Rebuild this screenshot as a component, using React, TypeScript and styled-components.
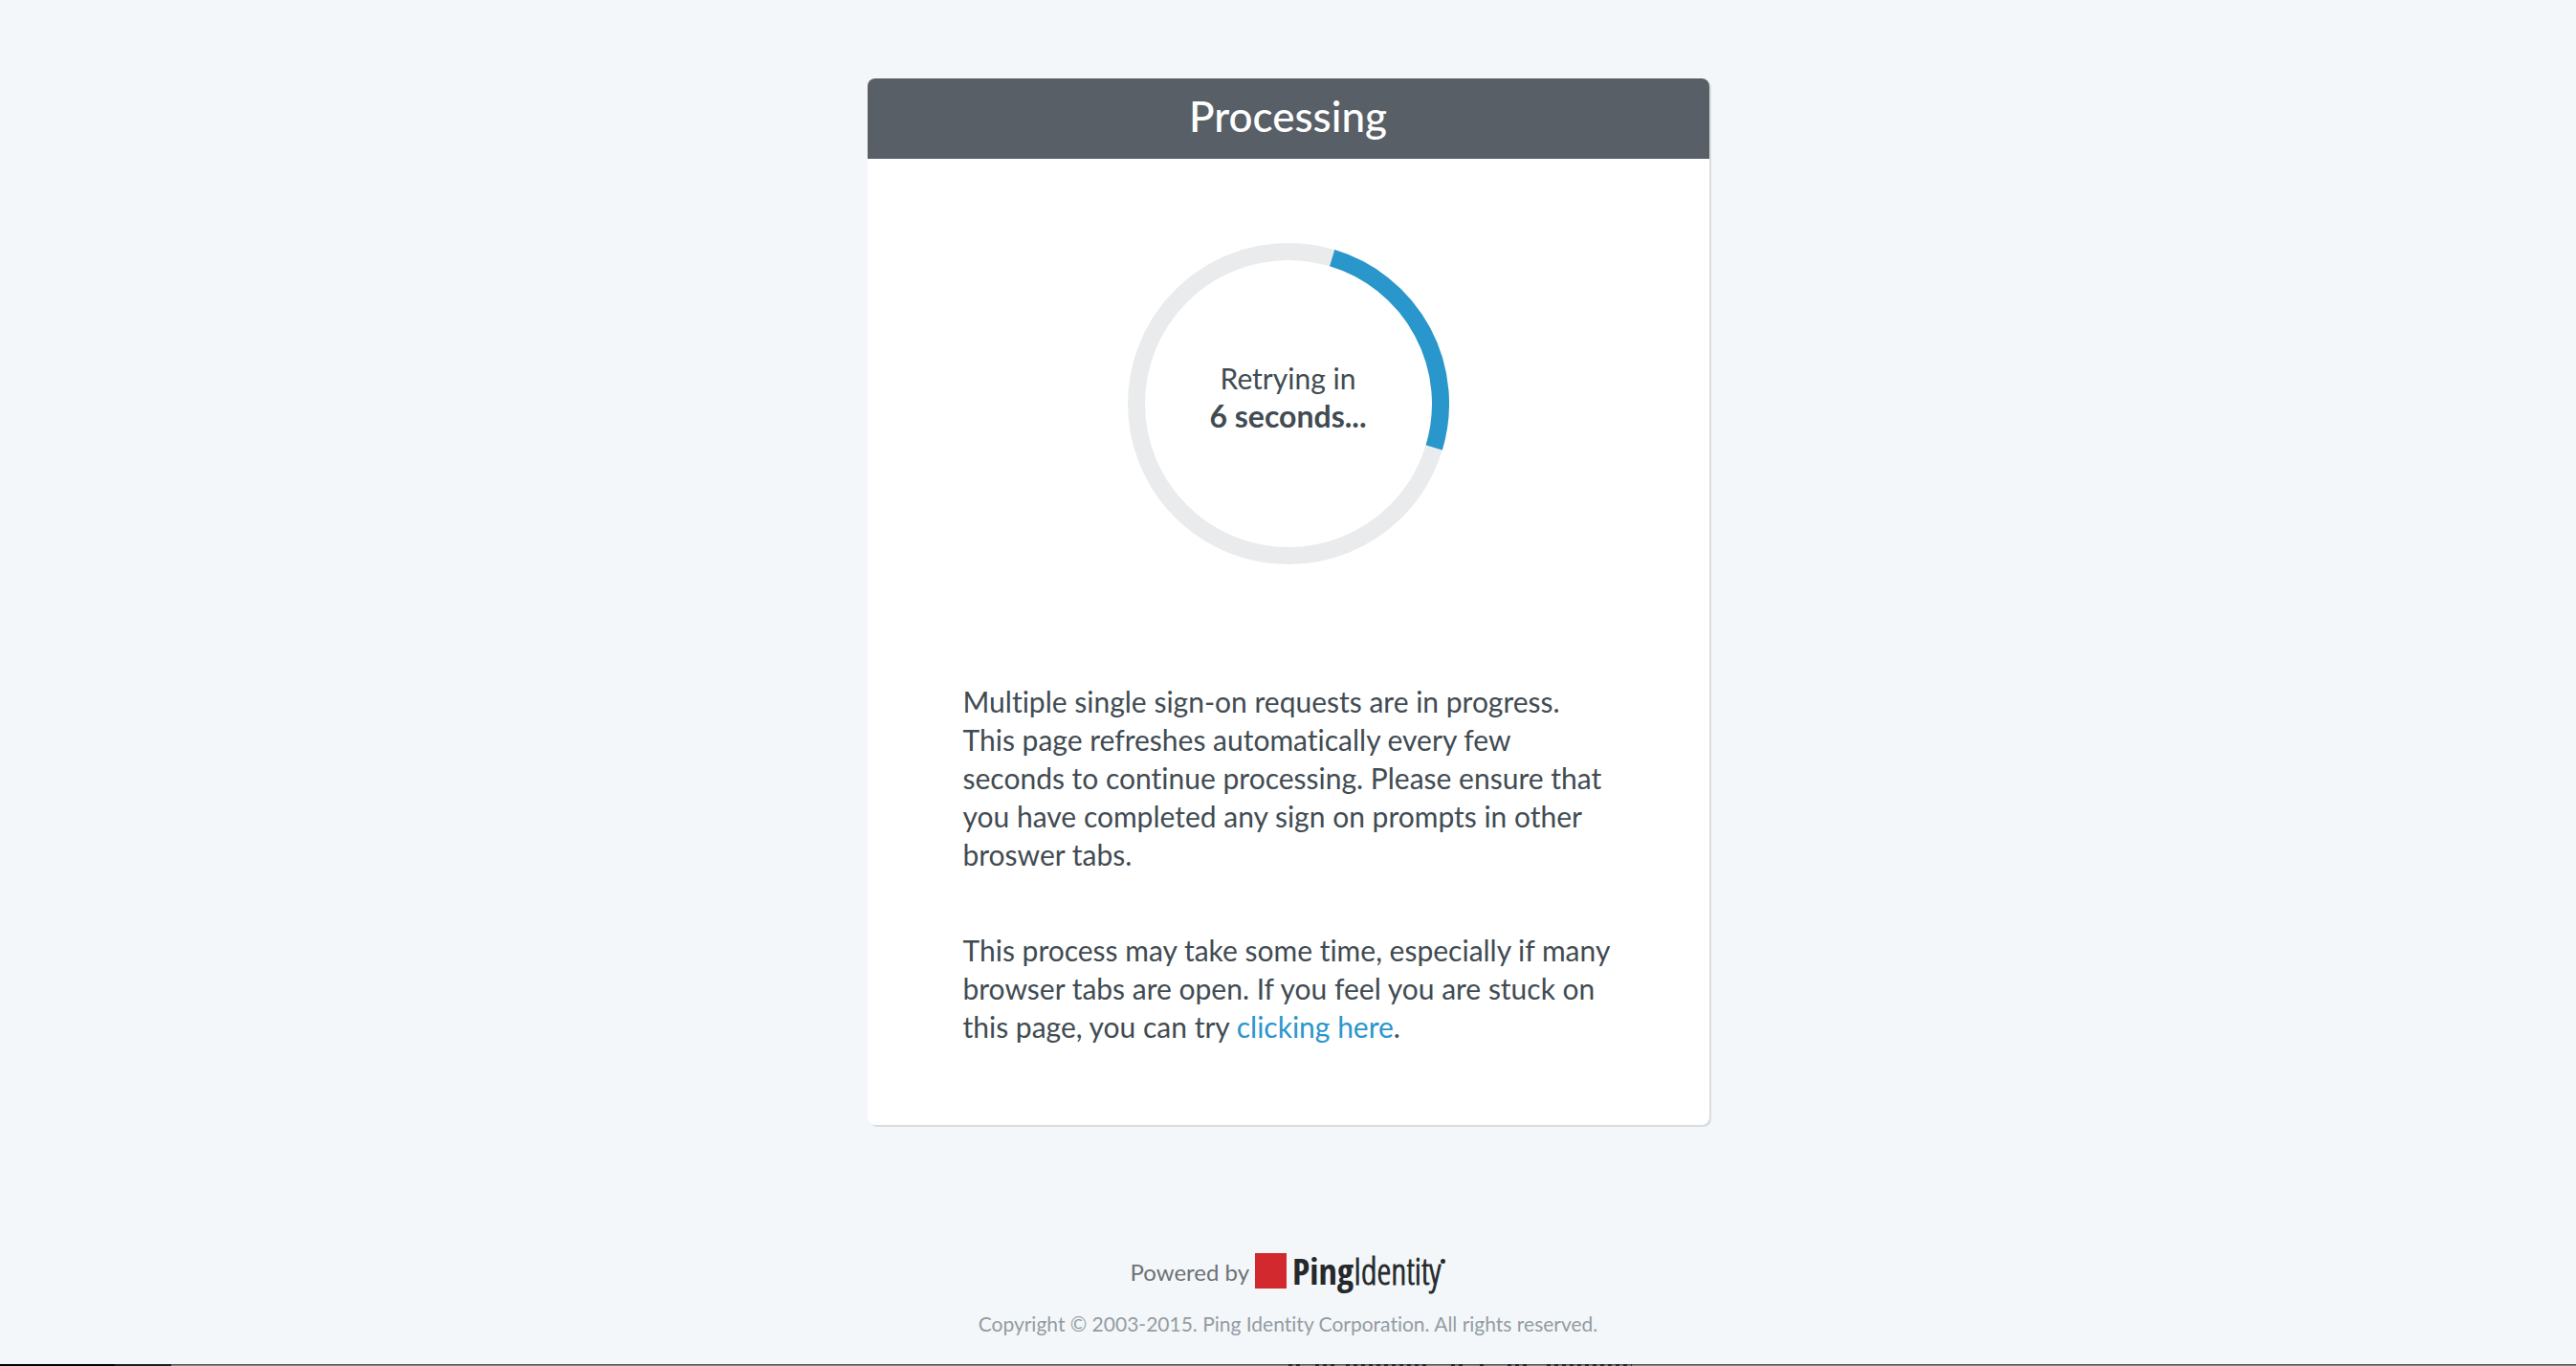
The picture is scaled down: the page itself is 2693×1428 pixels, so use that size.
import React from "react";
import styled, { createGlobalStyle } from "styled-components";

const GlobalStyle = createGlobalStyle`
  *, *::before, *::after { box-sizing: border-box; }
  body {
    margin: 0;
    background: #f3f7fa;
    color: #414b52;
    font-family: Lato, "Open Sans", sans-serif;
    font-size: 30px;
    line-height: 40px;
    font-variant-ligatures: no-common-ligatures;
  }
`;

const Page = styled.div`
  min-height: 100vh;
  display: flex;
  flex-direction: column;
  align-items: center;
  padding-top: 82px;
`;

const Card = styled.main`
  width: 100%;
  max-width: 880px;
  background: #fff;
  border-radius: 8px;
  box-shadow: 2px 2px 0 #dadde0;
`;

const CardTitle = styled.h1`
  margin: 0;
  height: 84px;
  display: flex;
  align-items: center;
  justify-content: center;
  padding-bottom: 6px;
  border-radius: 8px 8px 0 0;
  background: #585f66;
  color: #fff;
  font-size: 44px;
  font-weight: 500;
`;

const CardBody = styled.div`
  display: flex;
  flex-direction: column;
  align-items: center;
  padding: 88px 90px 83px 100px;
`;

const Timer = styled.div`
  display: grid;
  place-items: center;
  margin: 0 10px 123px 0;
  > * { grid-area: 1 / 1; }
`;

const TimerLabel = styled.p`
  margin: 0;
  padding-bottom: 14px;
  text-align: center;
`;

const Seconds = styled.strong`
  display: block;
  font-size: 32px;
  font-weight: 700;
`;

const Message = styled.p`
  margin: 0;
  width: 100%;
  & + & { margin-top: 60px; }
`;

const Link = styled.a`
  color: #2996cc;
  text-decoration: none;
`;

const Footer = styled.footer`
  display: flex;
  flex-direction: column;
  align-items: center;
  gap: 16px;
  padding: 132px 0 10px;
`;

const Powered = styled.div`
  display: flex;
  align-items: center;
  gap: 6px;
  height: 40px;
  color: #6d7274;
  font-size: 24px;
`;

const PoweredText = styled.span`
  padding-top: 4px;
`;

const RedSquare = styled.span`
  width: 33px;
  height: 37px;
  background: #d1292e;
`;

const Brand = styled.span`
  display: flex;
  color: #25292c;
  font-family: "Open Sans Condensed", "Open Sans", sans-serif;
  font-size: 38px;
  b { font-weight: 700; }
`;

const BrandLight = styled.span`
  font-family: "Open Sans Condensed Light", "Open Sans Light Condensed", "Open Sans Condensed", sans-serif;
  font-weight: 300;
  -webkit-text-stroke: 1px #25292c;
`;

const BrandDot = styled.span`
  align-self: flex-start;
  width: 5px;
  height: 5px;
  margin-top: 8px;
  border-radius: 50%;
  background: #25292c;
`;

const Copyright = styled.p`
  margin: 0;
  color: #949ca2;
  font-size: 21px;
`;

const BottomEdge = styled.div`
  display: flex;
  align-self: stretch;
  height: 2px;
  margin-top: auto;
  overflow: hidden;
  background: linear-gradient(#555 50%, #858585 50%);
`;

const Edge = styled.span<{ $color: string; $width: number }>`
  flex: 0 0 ${(p) => p.$width}px;
  background: ${(p) => p.$color};
`;

const RADIUS = 159;
const LENGTH = 2 * Math.PI * RADIUS;

function Ring() {
  return (
    <svg width="336" height="336" viewBox="0 0 336 336" fill="none" strokeWidth="18" aria-hidden="true">
      <circle cx="168" cy="168" r={RADIUS} stroke="#e9ebec" />
      <circle
        cx="168"
        cy="168"
        r={RADIUS}
        stroke="#2996cc"
        strokeDasharray={`${LENGTH / 4} ${LENGTH}`}
        transform="rotate(-73.3 168 168)"
      />
    </svg>
  );
}

const DASHES = "repeating-linear-gradient(90deg, #25272a 0 4px, transparent 4px 8px)";

const EDGES: [string, number][] = [
  ["#000005", 120],
  ["#1c1e21", 59],
  ["transparent", 1168],
  [DASHES, 16],
  ["transparent", 12],
  [DASHES, 22],
  ["transparent", 10],
  [DASHES, 86],
  ["transparent", 24],
  [DASHES, 16],
  ["transparent", 14],
  [DASHES, 4],
  ["transparent", 25],
  [DASHES, 4],
  ["transparent", 4],
  [DASHES, 16],
  ["transparent", 17],
  [DASHES, 89],
];

export default function App() {
  return (
    <>
      <GlobalStyle />
      <Page>
        <Card>
          <CardTitle>Processing</CardTitle>
          <CardBody>
            <Timer>
              <Ring />
              <TimerLabel>
                Retrying in <Seconds>6 seconds...</Seconds>
              </TimerLabel>
            </Timer>
            <Message>
              Multiple single sign-on requests are in progress.
              <br />
              This page refreshes automatically every few
              <br />
              seconds to continue processing. Please ensure that
              <br />
              you have completed any sign on prompts in other
              <br />
              broswer tabs.
            </Message>
            <Message>
              This process may take some time, especially if many
              <br />
              browser tabs are open. If you feel you are stuck on
              <br />
              this page, you can try <Link href="#">clicking here</Link>.
            </Message>
          </CardBody>
        </Card>
        <Footer>
          <Powered>
            <PoweredText>Powered by</PoweredText>
            <RedSquare />
            <Brand>
              <b>Ping</b>
              <BrandLight>Identity</BrandLight>
              <BrandDot />
            </Brand>
          </Powered>
          <Copyright>Copyright © 2003-2015. Ping Identity Corporation. All rights reserved.</Copyright>
        </Footer>
        <BottomEdge>
          {EDGES.map(([color, width], i) => (
            <Edge key={i} $color={color} $width={width} />
          ))}
        </BottomEdge>
      </Page>
    </>
  );
}
